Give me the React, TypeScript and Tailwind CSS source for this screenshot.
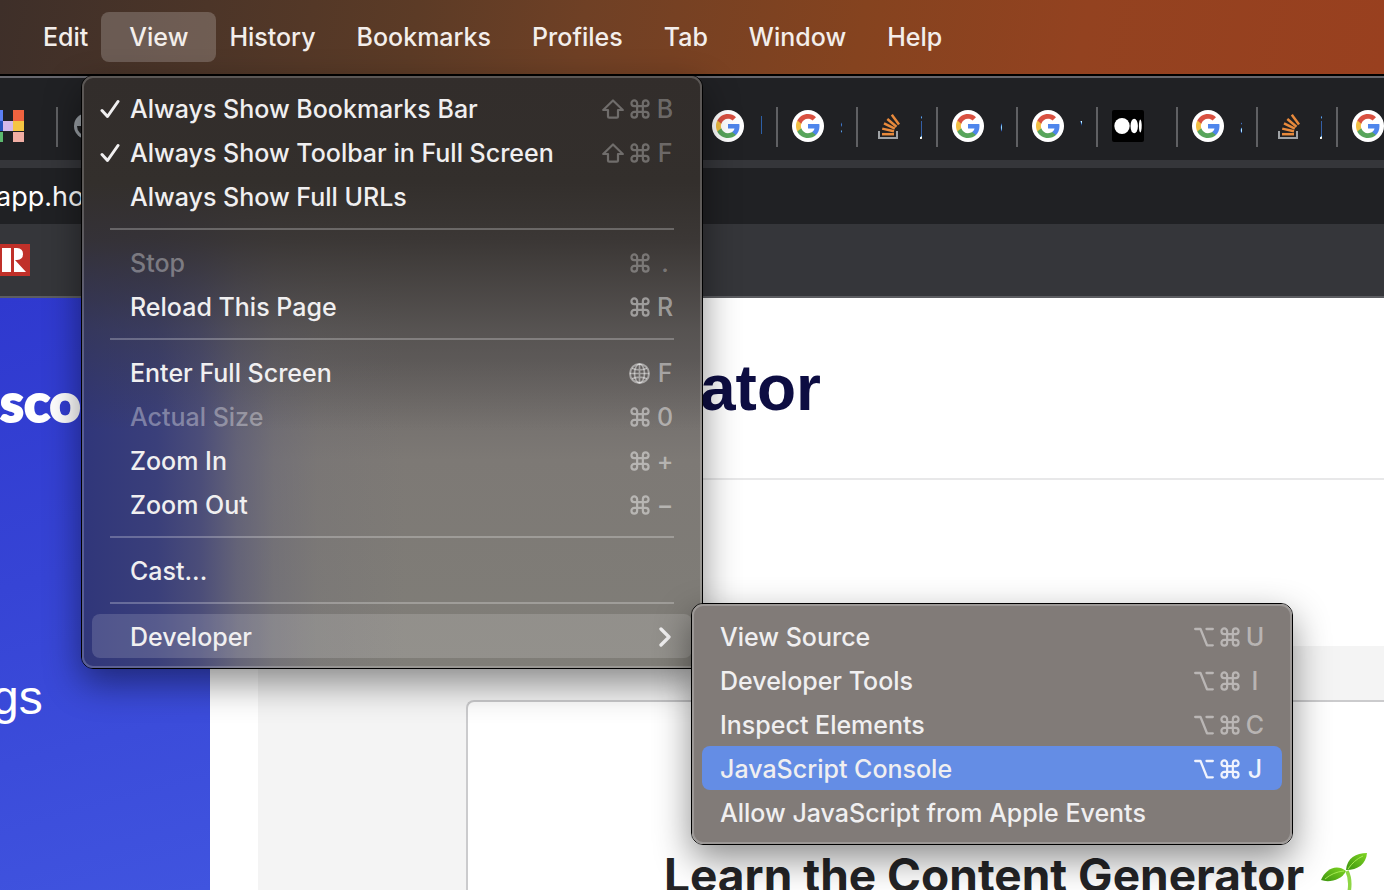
import type { ReactNode } from "react";
import clsx from "clsx";

/* ---------- Key glyphs ---------- */

function CommandKey() {
  return (
    <svg viewBox="1.5 1.5 21 21" className="size-5 shrink-0" fill="none" stroke="currentColor" strokeWidth="2.3" aria-hidden="true">
      <path d="M15 6v12a3 3 0 1 0 3-3H6a3 3 0 1 0 3 3V6a3 3 0 1 0-3 3h12a3 3 0 1 0-3-3" />
    </svg>
  );
}

function ShiftKey() {
  return (
    <svg viewBox="0 0 22 20" className="h-5 w-[22px] shrink-0" fill="none" stroke="currentColor" strokeWidth="2.2" strokeLinejoin="round" aria-hidden="true">
      <path d="M11 1.5 L20.8 11 H16 V17.5 Q16 18.7 14.8 18.7 H7.2 Q6 18.7 6 17.5 V11 H1.2 Z" />
    </svg>
  );
}

function OptionKey() {
  return (
    <svg viewBox="0 0 20 20" className="size-5 shrink-0" fill="none" stroke="currentColor" strokeWidth="2.300" strokeLinecap="round" strokeLinejoin="round" aria-hidden="true">
      <path d="M1.200 2 H6.500 L13 18.300 H18.800 M12.500 2 H18.800" />
    </svg>
  );
}

function GlobeKey() {
  return (
    <svg viewBox="0 0 21 21" className="size-[21px] shrink-0" fill="none" stroke="currentColor" strokeWidth="1.700" aria-hidden="true">
      <circle cx="10.5" cy="10.5" r="9.5" strokeWidth="2" />
      <ellipse cx="10.5" cy="10.5" rx="5" ry="9.5" />
      <path d="M10.5 1V20M1 10.5H20M3 5.2Q10.5 8.4 18 5.2M3 15.8Q10.5 12.6 18 15.8" />
    </svg>
  );
}

/* ---------- Tab icons ---------- */

function GoogleIcon() {
  return (
    <svg viewBox="0 0 32 32" className="size-8 shrink-0" aria-hidden="true">
      <circle cx="16" cy="16" r="16" fill="#fff" />
      <g transform="translate(4 4)">
        <path fill="#4f86ec" d="M23.5 12.3c0-.8-.1-1.600-.2-2.300H12v4.500h6.500c-.3 1.500-1.100 2.700-2.400 3.600v3h3.900c2.200-2.100 3.500-5.200 3.500-8.800z" />
        <path fill="#58a55c" d="M12 24c3.200 0 6-1.100 8-2.900l-3.900-3c-1.100.7-2.500 1.200-4.100 1.200-3.100 0-5.800-2.100-6.700-5H1.300v3.100C3.300 21.300 7.300 24 12 24z" />
        <path fill="#f1bf42" d="M5.300 14.300c-.3-.7-.4-1.500-.4-2.300s.1-1.600.4-2.300V6.600H1.300C.5 8.200 0 10 0 12s.5 3.800 1.300 5.400l4-3.100z" />
        <path fill="#d95040" d="M12 4.800c1.800 0 3.300.6 4.600 1.800L20 3.200C17.900 1.200 15.200 0 12 0 7.300 0 3.300 2.700 1.300 6.600l4 3.100c.9-2.800 3.600-4.900 6.700-4.900z" />
      </g>
    </svg>
  );
}

function StackIcon() {
  return (
    <svg viewBox="0 0 32 32" className="size-8 shrink-0" fill="none" aria-hidden="true">
      <path d="M7 21V28H25V21" stroke="#9fa2a5" strokeWidth="2" />
      <g stroke="#e88a3c" strokeWidth="2.500">
        <path d="M10 24.200H22" />
        <path d="M10.200 18.600L22 21.300" />
        <path d="M12 13.300L22.800 18.700" />
        <path d="M15.300 9L24.500 16.700" />
        <path d="M19.800 4.800L27 14.400" />
      </g>
    </svg>
  );
}

function MediumIcon() {
  return (
    <svg viewBox="0 0 32 32" className="size-8 shrink-0" aria-hidden="true">
      <rect width="32" height="32" rx="2" fill="#000" />
      <g fill="#fff">
        <ellipse cx="10" cy="16" rx="7.700" ry="8" />
        <ellipse cx="22.200" cy="16" rx="3.700" ry="7.300" />
        <ellipse cx="28.300" cy="16" rx="1.400" ry="6.500" />
      </g>
    </svg>
  );
}

function BlocksIcon() {
  return (
    <svg viewBox="0 0 32 32" className="size-8 shrink-0" aria-hidden="true">
      <rect width="11" height="11" fill="#5b7ff2" />
      <rect y="11" width="11" height="10" fill="#2453bd" />
      <rect y="22" width="11" height="10" fill="#5cb96f" />
      <rect x="11" y="11" width="11" height="10" fill="#d4b9ea" />
      <rect x="21" width="11" height="11" fill="#ef633f" />
      <rect x="21" y="11" width="11" height="10" fill="#f5c543" />
      <rect x="21" y="22" width="11" height="10" fill="#f1aea4" />
    </svg>
  );
}

function WorldIcon() {
  return (
    <svg viewBox="0 0 32 32" className="size-8 shrink-0" aria-hidden="true">
      <circle cx="15" cy="16" r="13" fill="#9aa0a6" />
      <path d="M5 16h7l3 4v6a10 10 0 0 1-10-10z" fill="#202124" />
    </svg>
  );
}

function RealtorIcon() {
  return (
    <svg viewBox="0 0 32 32" className="size-8 shrink-0" aria-hidden="true">
      <rect width="32" height="32" fill="#c03029" />
      <path fill="#fff" d="M4 4h9v24H4zM16 4h3q6 .3 6 6t-6 6h-3zM16 16h1l11 12H16z" />
    </svg>
  );
}

type Tab = { icon: ReactNode; title: string };

const leadingTabs: Tab[] = [
  { icon: <BlocksIcon />, title: "" },
  { icon: <WorldIcon />, title: "" },
];

const tabs: Tab[] = [
  { icon: <GoogleIcon />, title: "l" },
  { icon: <GoogleIcon />, title: "s" },
  { icon: <StackIcon />, title: "j" },
  { icon: <GoogleIcon />, title: "c" },
  { icon: <GoogleIcon />, title: "v" },
  { icon: <MediumIcon />, title: "" },
  { icon: <GoogleIcon />, title: "a" },
  { icon: <StackIcon />, title: "j" },
  { icon: <GoogleIcon />, title: "" },
];

function BrowserTab({ icon, title }: Tab) {
  return (
    <div className="flex h-10 w-20 shrink-0 items-start gap-4 border-r-2 border-[#5f6063] pt-[3px] pl-[14px]">
      {icon}
      <span className="w-[2px] overflow-hidden text-2xl leading-8 text-white">{title}</span>
    </div>
  );
}

/* ---------- Menus ---------- */

const barItems = ["Edit", "View", "History", "Bookmarks", "Profiles", "Tab", "Window", "Help"];

type Key = "shift" | "cmd" | "opt" | "globe";
type Item = { label: string; keys?: Key[]; char?: string; checked?: boolean; disabled?: boolean; open?: boolean; active?: boolean; dim?: boolean };

const viewGroups: Item[][] = [
  [
    { label: "Always Show Bookmarks Bar", keys: ["shift", "cmd"], char: "B", checked: true, dim: true },
    { label: "Always Show Toolbar in Full Screen", keys: ["shift", "cmd"], char: "F", checked: true, dim: true },
    { label: "Always Show Full URLs" },
  ],
  [
    { label: "Stop", keys: ["cmd"], char: ".", disabled: true, dim: true },
    { label: "Reload This Page", keys: ["cmd"], char: "R" },
  ],
  [
    { label: "Enter Full Screen", keys: ["globe"], char: "F" },
    { label: "Actual Size", keys: ["cmd"], char: "0", disabled: true },
    { label: "Zoom In", keys: ["cmd"], char: "+" },
    { label: "Zoom Out", keys: ["cmd"], char: "−" },
  ],
  [{ label: "Cast..." }],
  [{ label: "Developer", open: true }],
];

const developerItems: Item[] = [
  { label: "View Source", keys: ["opt", "cmd"], char: "U" },
  { label: "Developer Tools", keys: ["opt", "cmd"], char: "I" },
  { label: "Inspect Elements", keys: ["opt", "cmd"], char: "C" },
  { label: "JavaScript Console", keys: ["opt", "cmd"], char: "J", active: true },
  { label: "Allow JavaScript from Apple Events" },
];

function KeyGlyph({ name }: { name: Key }) {
  if (name === "shift") return <ShiftKey />;
  if (name === "opt") return <OptionKey />;
  if (name === "globe") return <GlobeKey />;
  return <CommandKey />;
}

function MenuItem({ item, inset }: { item: Item; inset?: boolean }) {
  return (
    <button
      type="button"
      role="menuitem"
      disabled={item.disabled}
      className={clsx(
        "flex h-11 w-full items-center rounded-lg pt-[2px] pr-[18px] text-left text-[25px] leading-8 font-medium whitespace-nowrap",
        inset ? "pl-2" : "pl-[18px]",
        item.active && "bg-[#648de5]",
        item.open && "bg-white/15",
        item.disabled ? "text-white/35" : "text-[#f0eff0]",
      )}
    >
      {inset && (
        <span className="w-[30px] shrink-0">
          {item.checked && (
            <svg viewBox="0 0 20 20" className="size-5" fill="none" stroke="currentColor" strokeWidth="3" strokeLinecap="round" strokeLinejoin="round" aria-hidden="true">
              <path d="M2 11.500L7.500 17.500L18 2.500" />
            </svg>
          )}
        </span>
      )}
      <span className="grow">{item.label}</span>
      {item.keys && (
        <span
          className={clsx(
            "flex items-center gap-[6px]",
            item.active ? "text-[#f0f3fd]" : item.dim ? "text-white/30" : "text-white/45",
          )}
        >
          {item.keys.map((k) => (
            <KeyGlyph key={k} name={k} />
          ))}
          <span className="flex w-[18px] justify-center">{item.char}</span>
        </span>
      )}
      {item.open && (
        <svg viewBox="0 0 14 20" className="h-5 w-4" fill="none" stroke="currentColor" strokeWidth="3.300" strokeLinecap="round" strokeLinejoin="round" aria-hidden="true">
          <path d="M2 2L10 10L2 18" />
        </svg>
      )}
    </button>
  );
}

export default function App() {
  return (
    <div className="relative flex h-screen flex-col overflow-hidden bg-white font-['Inter','Liberation_Sans',sans-serif]">
      <nav className="flex h-[74px] shrink-0 items-center gap-[41px] bg-[linear-gradient(100deg,#3e2f29_0%,#4c3528_15%,#5c3b26_30%,#6f4025_42%,#85431f_62%,#934220_78%,#99401f_100%)] pl-[43px] text-[25px] leading-8 font-medium text-[#f3eeeb] [text-shadow:0_2px_4px_rgb(0_0_0/0.35)]">
        {barItems.map((label) => (
          <button
            key={label}
            type="button"
            className={clsx("h-[50px] rounded-lg", label === "View" && "-mx-7 bg-white/20 px-7")}
          >
            {label}
          </button>
        ))}
      </nav>

      <header className="shrink-0 border-t-2 border-black bg-[#202124]">
        <div className="flex h-[84px] items-center border-t-2 border-[#66666c] pt-4">
          <div className="-ml-[22px] flex">
            {leadingTabs.map((t, i) => (
              <BrowserTab key={i} {...t} />
            ))}
          </div>
          <div className="w-[560px] shrink-0" />
          {tabs.map((t, i) => (
            <BrowserTab key={i} {...t} />
          ))}
        </div>
        <div className="border-t-8 border-[#35363a]">
          <input
            aria-label="Address"
            defaultValue="app.ho"
            className="-ml-1 block h-14 w-full bg-transparent text-[27px] text-white outline-none"
          />
        </div>
        <div className="flex h-[74px] items-center border-b-2 border-[#5c5d61] bg-[#35363a]">
          <a href="#bookmark" className="-ml-[2px]">
            <RealtorIcon />
          </a>
        </div>
      </header>

      <div className="flex min-h-0 grow">
        <aside className="w-[210px] shrink-0 bg-[linear-gradient(165deg,#2f39cf_0%,#3644d5_45%,#4054df_100%)] text-white">
          <div className="pt-[72px] font-['Lato','Open_Sans',sans-serif] text-[54px] leading-[64px] font-black [-webkit-text-stroke:2px_white]">sco</div>
          <a href="#settings" className="-ml-2 block pt-[236px] font-['Liberation_Sans',sans-serif] text-[48px] leading-[56px]">
            gs
          </a>
        </aside>
        <main className="flex min-w-0 grow flex-col">
          <div className="h-[182px] shrink-0 border-b-2 border-[#e8e8e9] pt-[54px] pl-[490px]">
            <h1 className="font-['Liberation_Sans',sans-serif] text-[64px] leading-[72px] font-bold text-[#0d0d42]">ator</h1>
          </div>
          <div className="mt-[166px] ml-12 grow bg-[#f4f4f4] pt-[54px] pl-[208px]">
            <section className="h-full rounded-tl-lg border-t-2 border-l-2 border-[#cbcbcd] bg-white pt-[145px] pl-[196px]">
              <h2 className="flex items-center gap-4 text-[46px] leading-[56px] font-bold whitespace-nowrap text-[#242426]">
                Learn the Content Generator
                <svg viewBox="0 0 48 48" className="size-12 shrink-0" aria-hidden="true">
                  <defs>
                    <linearGradient id="leaf" x1="0" y1="1" x2="1" y2="0">
                      <stop offset="0" stopColor="#3c9410" />
                      <stop offset="1" stopColor="#7fd522" />
                    </linearGradient>
                  </defs>
                  <path d="M27 20Q32 30 28 46" fill="none" stroke="#8ed645" strokeWidth="3.500" />
                  <path d="M26 19C27 7 36 2 47 2C46 13 38 19 26 19Z" fill="url(#leaf)" />
                  <path d="M1 29C5 19 16 12 26 20C22 29 9 32 1 29Z" fill="url(#leaf)" />
                  <path d="M28 18Q34 9 43 5M5 28Q13 21 24 20" fill="none" stroke="#a5ea52" strokeWidth="1" />
                </svg>
              </h2>
            </section>
          </div>
        </main>
      </div>

      <div
        role="menu"
        className="absolute top-[75px] left-[81px] w-[622px] rounded-xl border border-black shadow-[0_14px_36px_rgb(0_0_0/0.45)]"
      >
        <div className="rounded-[11px] border-2 border-white/20 bg-[linear-gradient(to_bottom,#322d2b_0%,#332f2c_18%,#35312fe0_28%,#3b38366b_43%,#3b383600_60%),linear-gradient(to_right,#30367a_0%,#3a3f7a_12%,#4b4d79_19%,#5b5b78c0_25%,#6766777a_31%,#706e7640_38%,#74727400_52%),linear-gradient(to_bottom,#6b6766_0%,#6b6766_48%,#7d7975_65%,#807e78_100%)] bg-origin-border p-2">
          {viewGroups.map((group, i) => (
            <div key={i}>
              {i > 0 && (
                <div role="separator" className="flex h-[22px] items-center px-[18px]">
                  <div className="h-[2px] grow bg-white/25" />
                </div>
              )}
              {group.map((item) => (
                <MenuItem key={item.label} item={item} inset />
              ))}
            </div>
          ))}
        </div>
      </div>

      <div
        role="menu"
        className="absolute top-[603px] left-[691px] w-[602px] rounded-xl border border-black shadow-[0_14px_36px_rgb(0_0_0/0.45)]"
      >
        <div className="rounded-[11px] border-2 border-[#9c9896] bg-[#817b78] p-2">
          {developerItems.map((item) => (
            <MenuItem key={item.label} item={item} />
          ))}
        </div>
      </div>
    </div>
  );
}
